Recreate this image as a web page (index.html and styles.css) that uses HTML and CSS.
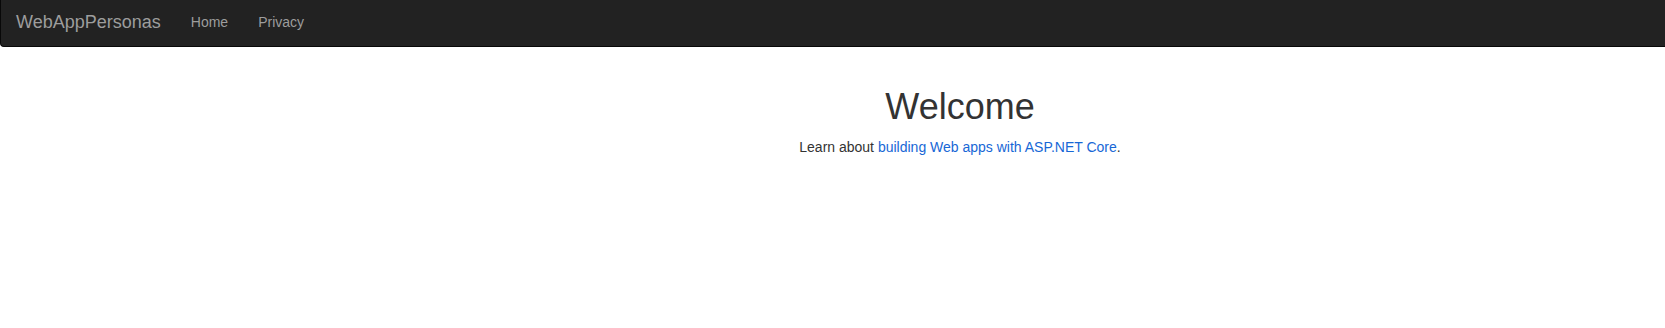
FILE: index.html
```html
<!DOCTYPE html>
<html lang="en">
<head>
    <meta charset="UTF-8">
    <meta name="viewport" content="width=device-width, initial-scale=1.0">
    <title>Home Page - WebAppPersonas</title>
    <link rel="stylesheet" href="styles.css">
</head>
<body>
    <nav class="navbar">
        <a class="navbar-brand" href="#">WebAppPersonas</a>
        <ul class="nav">
            <li><a href="#">Home</a></li>
            <li><a href="#">Privacy</a></li>
        </ul>
    </nav>

    <div class="container">
        <div class="text-center">
            <h1>Welcome</h1>
            <p>Learn about <a href="#">building Web apps with ASP.NET Core</a>.</p>
        </div>
    </div>
</body>
</html>
```

FILE: styles.css
```css
body {
    margin: 0;
    font-family: "Liberation Sans", Arial, sans-serif;
    font-size: 14px;
    line-height: 20px;
    color: #333;
    background-color: #fff;
}
a {
    color: #1767d6;
    text-decoration: none;
}
.navbar {
    display: flex;
    align-items: flex-start;
    height: 46px;
    margin-bottom: 20px;
    background-color: #222;
    border-left: 1px solid #080808;
    border-bottom: 1px solid #080808;
    border-bottom-left-radius: 4px;
}
.navbar-brand {
    padding: 12px 15px 14px;
    font-size: 18px;
    line-height: 20px;
    color: #9d9d9d;
}
.nav {
    display: flex;
    margin: 0;
    padding: 0;
    list-style: none;
}
.nav a {
    display: block;
    padding: 12px 15px 14px;
    color: #9d9d9d;
}
.container {
    display: flow-root;
    padding: 0 0 0 255px;
}
.text-center {
    text-align: center;
}
h1 {
    margin: 20px 0 10px;
    font-size: 36px;
    font-weight: 500;
    line-height: 1.1;
}
p {
    margin: 0 0 10px;
}
```
